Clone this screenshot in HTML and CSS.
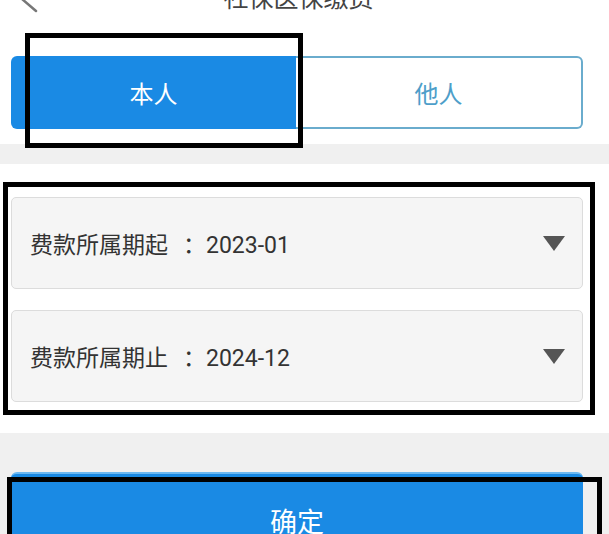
FILE: index.html
```html
<!DOCTYPE html>
<html>
<head>
  <meta charset="utf-8">
  <title>社保医保缴费</title>
  <link rel="stylesheet" href="styles.css">
</head>
<body>
  <div class="page">

    <div class="header">
      <svg class="back" width="20" height="30" viewBox="0 0 20 30">
        <path d="M18 3 L4 15 L18 27" fill="none" stroke="#777" stroke-width="2.5" stroke-linecap="round" stroke-linejoin="round"/>
      </svg>
      <div class="title">社保医保缴费</div>
      <div></div>
    </div>

    <div class="top">
      <div class="segment">
        <div class="seg-item active">本人</div>
        <div class="seg-item">他人</div>
      </div>
    </div>

    <div class="band"></div>

    <div class="form">
      <div class="select">
        <span class="label">费款所属期起<span class="colon">：</span>2023-01</span>
        <span class="arrow"></span>
      </div>
      <div class="select">
        <span class="label">费款所属期止<span class="colon">：</span>2024-12</span>
        <span class="arrow"></span>
      </div>
    </div>

    <div class="footer">
      <button class="btn">确定</button>
    </div>

    <!-- annotation boxes -->
    <div class="mark mark-who"></div>
    <div class="mark mark-period"></div>
    <div class="mark mark-submit"></div>

  </div>
</body>
</html>
```

FILE: styles.css
```css
body {
  margin: 0;
  font-family: Roboto, "Noto Sans CJK SC", sans-serif;
  background: #fff;
  color: #333;
}

.page {
  position: relative;
  width: 609px;
  height: 534px;
  overflow: hidden;
  background: #f0f0f0;
}

.header {
  display: grid;
  grid-template-columns: 1fr auto 1fr;
  height: 56px;
  background: #fff;
}

.back {
  margin-top: -16px;
  margin-left: 18px;
}

.title {
  margin-top: -14px;
  margin-right: 12px;
  font-size: 25px;
  line-height: 25px;
  color: #444;
}

.top {
  background: #fff;
  padding: 0 26px 15px 11px;
}

.segment {
  display: flex;
  height: 73px;
}

.seg-item {
  flex: 1;
  display: flex;
  align-items: center;
  justify-content: center;
  font-size: 24px;
  color: #4d9ec9;
  border: 2px solid #6aaccd;
  border-left: none;
  border-radius: 0 6px 6px 0;
}

.seg-item.active {
  background: #1a8ae4;
  color: #fff;
  border: none;
  border-radius: 6px 0 0 6px;
}

.band {
  height: 20px;
  background: #f0f0f0;
}

.form {
  background: #fff;
  padding: 33px 26px 31px 11px;
  display: flex;
  flex-direction: column;
  gap: 21px;
}

.select {
  height: 92px;
  box-sizing: border-box;
  display: flex;
  align-items: center;
  justify-content: space-between;
  padding: 0 17px 0 18px;
  background: #f5f5f5;
  border: 1px solid #dcdcdc;
  border-radius: 5px;
  font-size: 23px;
  color: #333;
}

.colon {
  margin-left: 15px;
}

.arrow {
  width: 0;
  height: 0;
  border-left: 11px solid transparent;
  border-right: 11px solid transparent;
  border-top: 15px solid #555;
}

.footer {
  padding: 39px 26px 0 11px;
}

.btn {
  display: block;
  width: 100%;
  height: 94px;
  border: none;
  border-top: 2px solid #6cb9f2;
  border-radius: 6px 6px 0 0;
  background: #1a8ae4;
  color: #fff;
  font-family: "Noto Sans CJK SC", sans-serif;
  font-size: 27px;
}

.mark {
  position: absolute;
  box-sizing: border-box;
  border: 5px solid #000;
}

.mark-who {
  left: 25px;
  top: 33px;
  width: 278px;
  height: 115px;
}

.mark-period {
  left: 3px;
  top: 182px;
  width: 592px;
  height: 233px;
}

.mark-submit {
  left: 7px;
  top: 477px;
  width: 595px;
  height: 90px;
}
```
